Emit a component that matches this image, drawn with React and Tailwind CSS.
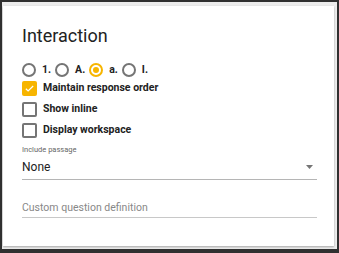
import React, { useState } from "react";

const Radio = ({ checked, label, onClick }) => (
  <button type="button" onClick={onClick} className="flex items-center gap-[6px]">
    <span
      className={`flex h-[14px] w-[14px] items-center justify-center rounded-full border-[2px] ${
        checked ? "border-[#f7b500]" : "border-[#757575]"
      }`}
    >
      {checked && <span className="h-[6px] w-[6px] rounded-full bg-[#f7b500]" />}
    </span>
    <span className="text-[10.5px] font-bold text-[#222]">{label}</span>
  </button>
);

const Checkbox = ({ checked, label, onClick }) => (
  <button type="button" onClick={onClick} className="flex h-[21px] items-center gap-[6px]">
    <span
      className={`flex h-[15px] w-[15px] items-center justify-center rounded-[2px] ${
        checked ? "bg-[#f7b500]" : "border-[2px] border-[#757575]"
      }`}
    >
      {checked && (
        <svg width="11" height="11" viewBox="0 0 24 24">
          <path d="M4 12.5l5 5L20 6.5" fill="none" stroke="#fff" strokeWidth="2.6" />
        </svg>
      )}
    </span>
    <span className="text-[10.5px] font-bold text-[#222]">{label}</span>
  </button>
);

export default function App() {
  const [format, setFormat] = useState("a.");
  const [opts, setOpts] = useState({
    maintain: true,
    inline: false,
    workspace: false,
  });

  const toggle = (key) => setOpts({ ...opts, [key]: !opts[key] });

  return (
    <div
      className="h-[253px] w-[339px] bg-[#303030] pl-[2px] pr-[2px] pt-[2px] pb-[4px]"
      style={{ fontFamily: "Roboto, 'Noto Sans', sans-serif" }}
    >
      <div className="flex h-full flex-col bg-[#ececec] pl-[1px] pr-[3px] pt-[4px] pb-[3px]">
        <div className="flex-1 bg-white px-[19px] pt-[19px] shadow-[0_1px_2px_rgba(0,0,0,0.3)]">
          <h2 className="text-[18px] leading-[22px] text-[#222]">Interaction</h2>

          {/* numbering style */}
          <div className="mt-[15px] flex items-center gap-[4px]">
            {["1.", "A.", "a.", "I."].map((f) => (
              <Radio key={f} label={f} checked={format === f} onClick={() => setFormat(f)} />
            ))}
          </div>

          <div className="flex flex-col">
            <Checkbox
              label="Maintain response order"
              checked={opts.maintain}
              onClick={() => toggle("maintain")}
            />
            <Checkbox label="Show inline" checked={opts.inline} onClick={() => toggle("inline")} />
            <Checkbox
              label="Display workspace"
              checked={opts.workspace}
              onClick={() => toggle("workspace")}
            />
          </div>

          {/* passage select */}
          <div className="mt-[4px] w-[295px]">
            <p className="text-[7.5px] leading-[10px] text-[#666]">Include passage</p>
            <div className="flex h-[25px] items-center justify-between border-b border-[#b5b5b5]">
              <span className="text-[12px] text-[#222]">None</span>
              <svg width="7" height="4" viewBox="0 0 7 4" className="mr-[4px]">
                <path d="M0 0h7L3.5 4z" fill="#757575" />
              </svg>
            </div>
          </div>

          <input
            placeholder="Custom question definition"
            className="mt-[18px] h-[20px] w-[295px] border-b border-[#c8c8c8] text-[10.5px] text-[#222] outline-none placeholder:text-[#888]"
          />
        </div>
      </div>
    </div>
  );
}
